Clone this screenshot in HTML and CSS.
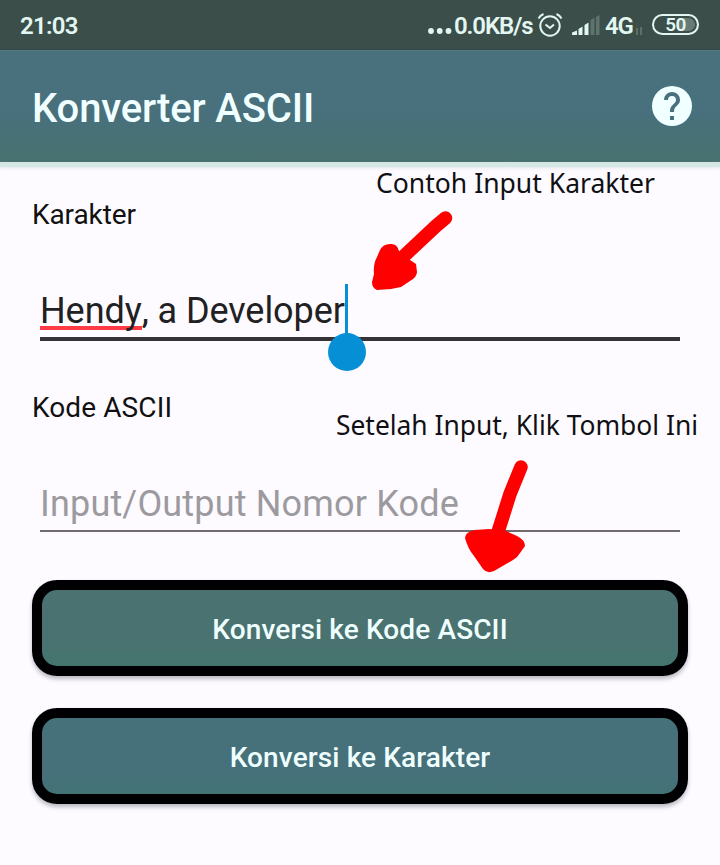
FILE: index.html
```html
<!DOCTYPE html>
<html lang="id">
<head>
<meta charset="utf-8">
<title>Konverter ASCII</title>
<link rel="stylesheet" href="styles.css">
</head>
<body>
<header class="status-bar">
  <span class="clock">21:03</span>
  <div class="indicators">
    <svg class="dots" width="24" height="8" viewBox="0 0 24 8"><circle cx="3" cy="4" r="2.900"/><circle cx="11.750" cy="4" r="2.900"/><circle cx="20.500" cy="4" r="2.900"/></svg>
    <span class="speed">0.0KB/s</span>
    <svg class="alarm" width="26" height="26" viewBox="0 0 26 26"><circle cx="13" cy="14" r="9.700"/><path d="M8.500 12.500l4.500 3.500 4-3.500M1.500 6.500q1.500-3 5-4.500M24.500 6.500q-1.500-3-5-4.500"/></svg>
    <svg class="signal" width="30" height="22" viewBox="0 0 30 22"><path d="M1 21v-2.500l5-2v4.500zM7.500 21v-6l4-2.500v8.500zM13.500 21v-10l4-2.500v12.500z"/><path class="off" d="M19.500 21V6l4-2.500v17.500zM25 21V3l3.500-2v20z"/></svg>
    <span class="network">4G</span>
    <svg class="activity" width="8" height="10" viewBox="0 0 8 10"><path d="M2 2v7M6 1v8"/></svg>
    <span class="battery">50</span>
  </div>
</header>
<div class="app-bar">
  <h1 class="title">Konverter ASCII</h1>
  <svg class="help" width="40" height="40" viewBox="2 2 20 20"><path d="M12 2a10 10 0 1 0 0 20 10 10 0 0 0 0-20zm1 17h-2v-2h2zm2.070-7.750l-.9.920C13.450 12.900 13 13.500 13 15h-2v-.5c0-1.100.450-2.100 1.170-2.830l1.240-1.260c.370-.360.590-.860.590-1.410a2 2 0 0 0-4 0H8a4 4 0 0 1 8 0c0 .880-.360 1.680-.930 2.250z"/></svg>
</div>
<main class="form">
  <div class="label">Karakter</div>
  <div class="field focused"><span class="misspelled">Hendy</span>, a Developer<span class="caret"></span></div>
  <div class="label second">Kode ASCII</div>
  <div class="field hint">Input/Output Nomor Kode</div>
  <div class="button green">Konversi ke Kode ASCII</div>
  <div class="button blue">Konversi ke Karakter</div>
</main>
<svg class="annotations" width="720" height="865" viewBox="0 0 720 865">
  <text x="376" y="192.500" textLength="279" lengthAdjust="spacingAndGlyphs">Contoh Input Karakter</text>
  <text x="336" y="434.500" textLength="362" lengthAdjust="spacingAndGlyphs">Setelah Input, Klik Tombol Ini</text>
  <path class="shaft" d="M445.500 218L436 226 403 257"/>
  <path d="M399 251Q397 243 390 244Q383 244 380 250L377 257Q373 264 374 274L372 282Q372 288 377 290L391 289L401 287L410 281Q417 277 417 272L416 264L410 260Z"/>
  <path class="shaft" d="M521 467L510 494 498 532"/>
  <path d="M489 529L475 530Q465 532 465 538Q468 549 474 556L483 569Q487 574 494 571L513 560Q518 557 520 553L525 546Q525 540 517 536L506 531Z"/>
</svg>
</body>
</html>
```
FILE: styles.css
```css
body {
  margin: 0;
  width: 720px;
  height: 865px;
  overflow: hidden;
  position: relative;
  background: #fdfbff;
  font-family: Roboto, sans-serif;
}

.status-bar {
  box-sizing: border-box;
  height: 50px;
  padding: 0 21px 0 20px;
  display: flex;
  justify-content: space-between;
  background: #3b4e49;
  border-bottom: 1px solid #31494d;
  color: #e3f7f2;
  font-size: 24px;
  font-weight: 600;
  line-height: 53px;
}

.clock { letter-spacing: -0.7px; }

.indicators {
  display: flex;
  height: 50px;
}

.indicators svg { flex: none; fill: #e3f7f2; }
.dots { margin-top: 27px; }

.speed {
  width: 79px;
  margin-left: 2px;
  letter-spacing: -1.1px;
}

.indicators .alarm {
  margin: 12px 0 0 4px;
  fill: none;
  stroke: #e3f7f2;
  stroke-width: 2;
}
.signal { margin: 14px 0 0 8px; }
.indicators .signal .off { fill: #5f736d; }

.network {
  width: 28px;
  margin-left: 4px;
  letter-spacing: -1.1px;
}

.indicators .activity {
  margin: 26px 0 0 2px;
  fill: none;
  stroke: #687b75;
  stroke-width: 1.5;
}

.battery {
  box-sizing: border-box;
  width: 47px;
  height: 21px;
  margin: 14px 0 0 9px;
  border: 2px solid #e3f7f2;
  border-radius: 11px;
  box-shadow: inset 0 0 0 2px #3b4e49;
  background: linear-gradient(90deg, #3b4e49 55%, #687b75 55%);
  text-align: center;
  font-size: 19px;
  letter-spacing: -0.5px;
  line-height: 18px;
}

.app-bar {
  box-sizing: border-box;
  height: 112px;
  padding: 0 28px 0 32px;
  display: flex;
  align-items: center;
  justify-content: space-between;
  background: linear-gradient(#49707d 0, #48707d 55%, #48716f 100%);
  border-top: 1px solid #557b80;
  box-shadow: 0 5px 1px #d5e7e5, 0 7px 3px #eeedf1;
}

.title {
  margin: 4px 0 0;
  color: #f0ffff;
  font-size: 40px;
  font-weight: 500;
  letter-spacing: -0.13px;
  line-height: 48px;
}

.help {
  margin-top: -2px;
  fill: #f0ffff;
}

.form {
  padding: 37px 32px 0;
  color: #111;
}

.label {
  font-size: 28px;
  letter-spacing: -0.1px;
  line-height: 32px;
}

.label.second {
  margin-top: 50px;
  letter-spacing: 0.1px;
}

.field {
  margin: 59px 8px 0;
  padding-bottom: 5px;
  border-bottom: 4px solid #343436;
  color: #212123;
  font-size: 36px;
  letter-spacing: -0.07px;
  line-height: 42px;
  white-space: nowrap;
}

.field.hint {
  border-bottom: 2px solid #716b70;
  color: #9c9a9e;
  letter-spacing: 0.17px;
}

.misspelled {
  display: inline-block;
  height: 42px;
  background: linear-gradient(#ff3b45, #ff3b45) 0 36px / 100% 4px no-repeat;
}

.caret {
  position: relative;
  display: inline-block;
  width: 0;
  height: 0;
}

.caret::before,
.caret::after {
  content: "";
  position: absolute;
  background: #078fd5;
}

.caret::before {
  left: 0;
  bottom: -12px;
  width: 3px;
  height: 51px;
}

.caret::after {
  left: -17px;
  top: 10px;
  width: 38px;
  height: 38px;
  border-radius: 50%;
}

.button {
  box-sizing: border-box;
  height: 96px;
  margin-top: 32px;
  border: 10px solid #000003;
  border-radius: 25px;
  box-shadow: 0 3px 4px rgba(30, 25, 50, 0.3);
  color: #effffe;
  font-size: 28px;
  font-weight: 500;
  letter-spacing: 0.12px;
  line-height: 80px;
  text-align: center;
}

.button.green {
  margin-top: 48px;
  background: linear-gradient(#4b7270, #497270 70%, #43766d);
}

.label.second + .field { margin-top: 60px; }

.button.blue {
  background: linear-gradient(#47717a, #46707a 70%, #437375);
}

.label.second {
  position: relative;
  top: 1px;
}

.annotations {
  position: absolute;
  top: 0;
  left: 0;
  fill: #f00;
}

.annotations text {
  fill: #101014;
  font: 27px "Noto Sans", sans-serif;
}

.shaft {
  fill: none;
  stroke: #f00;
  stroke-width: 13.5;
  stroke-linecap: round;
  stroke-linejoin: round;
}
```
